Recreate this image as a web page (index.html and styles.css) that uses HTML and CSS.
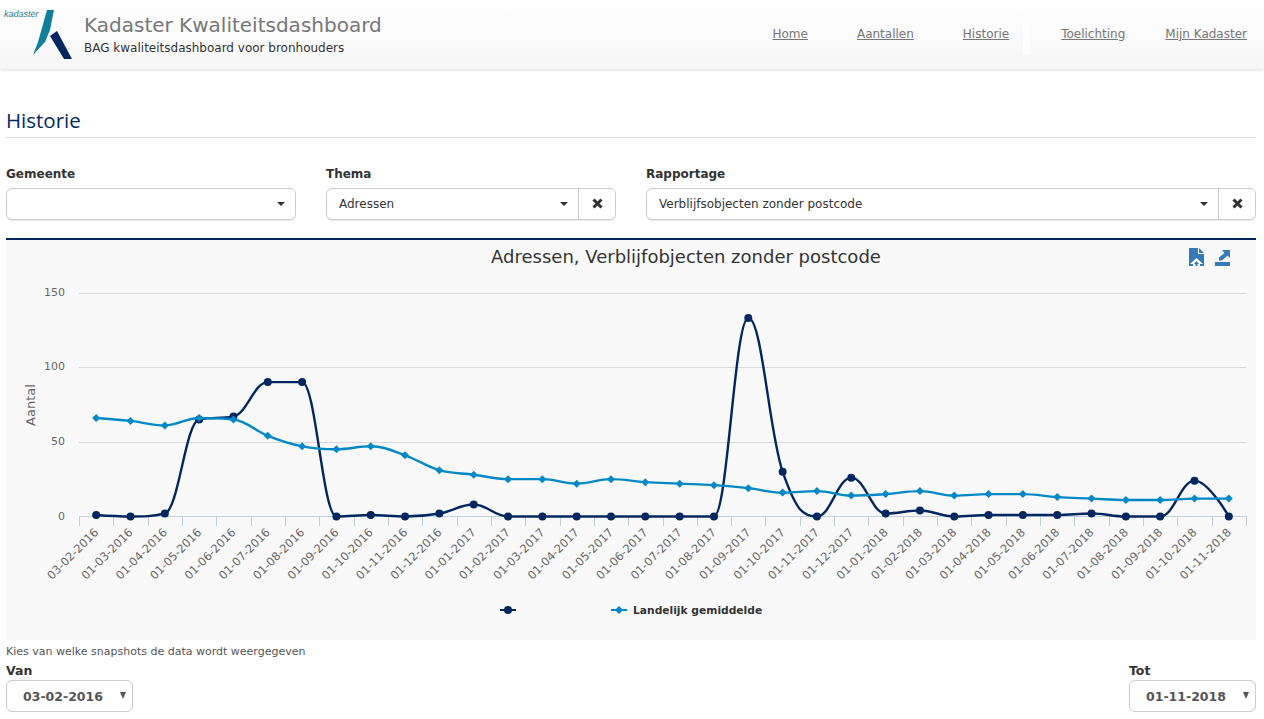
FILE: index.html
```html
<!DOCTYPE html>
<html lang="nl">
<head>
    <meta charset="UTF-8">
    <meta name="viewport" content="width=device-width, initial-scale=1.0">
    <title>Kadaster Kwaliteitsdashboard</title>
    <link rel="stylesheet" href="styles.css">
</head>
<body>
    <header class="topbar">
        <div class="brand">
            <div class="logo">
                <span class="logoText">kadaster</span>
                <svg class="logoMark" width="40" height="50" viewBox="0 0 40 50">
                    <polygon points="14,0 21,0 17,20 12,32 0,45 5,32" fill="#0f7f9c"></polygon>
                    <polygon points="17,26 24,21 39,49 31,49" fill="#00285f"></polygon>
                </svg>
            </div>
            <div class="brandText">
                <div class="siteTitle">Kadaster Kwaliteitsdashboard</div>
                <div class="siteSub">BAG kwaliteitsdashboard voor bronhouders</div>
            </div>
        </div>
        <nav class="mainNav">
            <a href="#" class="navHome">Home</a>
            <a href="#" class="navAantallen">Aantallen</a>
            <a href="#" class="navHistorie">Historie</a>
            <span class="navGap"></span>
            <a href="#" class="navToelichting">Toelichting</a>
            <a href="#" class="navMijn">Mijn Kadaster</a>
        </nav>
    </header>

    <main class="content">
        <h1 class="pageTitle">Historie</h1>

        <div class="filters">
            <div class="filter filterGemeente">
                <label>Gemeente</label>
                <div class="selectBox">
                    <div class="selectValue"><span></span><i class="caret"></i></div>
                </div>
            </div>
            <div class="filter filterThema">
                <label>Thema</label>
                <div class="selectBox">
                    <div class="selectValue"><span>Adressen</span><i class="caret"></i></div>
                    <button type="button" class="clearBtn">
                        <svg width="11" height="11" viewBox="0 0 11 11"><path d="M1.500 1.500L9.500 9.500M9.500 1.500L1.500 9.500" stroke="#333" stroke-width="3"></path></svg>
                    </button>
                </div>
            </div>
            <div class="filter filterRapportage">
                <label>Rapportage</label>
                <div class="selectBox">
                    <div class="selectValue"><span>Verblijfsobjecten zonder postcode</span><i class="caret"></i></div>
                    <button type="button" class="clearBtn">
                        <svg width="11" height="11" viewBox="0 0 11 11"><path d="M1.500 1.500L9.500 9.500M9.500 1.500L1.500 9.500" stroke="#333" stroke-width="3"></path></svg>
                    </button>
                </div>
            </div>
        </div>

        <section class="chartPanel">
            <div id="chart"></div>
        </section>

        <p class="hint">Kies van welke snapshots de data wordt weergegeven</p>
        <div class="range">
            <div class="rangeField">
                <label>Van</label>
                <div class="dateSelect"><span>03-02-2016</span><i class="caretSmall"></i></div>
            </div>
            <div class="rangeField">
                <label>Tot</label>
                <div class="dateSelect"><span>01-11-2018</span><i class="caretSmall"></i></div>
            </div>
        </div>
    </main>

    <script src="chart.js"></script>
</body>
</html>
```

FILE: styles.css
```css
* {
    box-sizing: border-box;
}

html, body {
    height: 100%;
}

body {
    margin: 0;
    font-family: Verdana, "DejaVu Sans", sans-serif;
    font-size: 12px;
    color: #333;
    background-color: #fff;
    overflow: hidden;
}

.topbar {
    height: 69px;
    display: flex;
    justify-content: space-between;
    background: linear-gradient(#fff, #f6f6f6);
    box-shadow: 0 1px 3px rgba(0, 0, 0, 0.15);
}

.brand {
    display: flex;
}

.logo {
    width: 84px;
    height: 60px;
    padding: 10px 0 0 4px;
    display: flex;
}

.logoText {
    width: 29px;
    font-family: "Liberation Sans", Arial, sans-serif;
    font-size: 9px;
    line-height: 9px;
    font-style: italic;
    color: #0f7f9c;
}

.logoMark {
    display: block;
}

.brandText {
    padding-top: 12px;
}

.siteTitle {
    font-size: 20px;
    line-height: 26px;
    color: #777;
}

.siteSub {
    font-size: 12px;
    line-height: 20px;
    color: #333;
}

.mainNav {
    display: flex;
    padding: 27px 17px 0 0;
}

.mainNav a {
    font-size: 12px;
    line-height: 15px;
    color: #777;
}

.navHome { margin-right: 49px; }
.navAantallen { margin-right: 49px; }
.navHistorie { margin-right: 14px; }
.navToelichting { margin-right: 40px; }

.navGap {
    width: 7px;
    height: 31px;
    margin: -4px 31px 0 0;
    background-color: #fff;
}

.content {
    padding: 0 8px 0 6px;
}

.pageTitle {
    margin: 40px 0 0;
    height: 29px;
    border-bottom: 1px solid #ddd;
    font-family: "Open Sans", sans-serif;
    font-size: 20.5px;
    line-height: 23px;
    font-weight: normal;
    color: #00285f;
}

.filters {
    display: flex;
    margin-top: 27px;
}

.filter label,
.rangeField label {
    display: block;
    font-weight: bold;
    color: #333;
}

.filter label {
    height: 23px;
    font-size: 12px;
    line-height: 19px;
}

.filterGemeente { width: 290px; margin-right: 30px; }
.filterThema { width: 290px; margin-right: 30px; }
.filterRapportage { width: 610px; }

.selectBox {
    display: flex;
    height: 32px;
    border: 1px solid #ccc;
    border-radius: 6px;
    background-color: #fff;
    box-shadow: 0 1px 1px rgba(0, 0, 0, 0.08);
}

.selectValue {
    flex: 1;
    display: flex;
    align-items: center;
    justify-content: space-between;
    padding: 0 10px 0 12px;
    font-size: 12px;
}

.caret {
    width: 0;
    height: 0;
    border-left: 4px solid transparent;
    border-right: 4px solid transparent;
    border-top: 4px solid #333;
}

.clearBtn {
    width: 37px;
    padding: 0 0 2px;
    border: none;
    border-left: 1px solid #ccc;
    background: none;
    display: flex;
    align-items: center;
    justify-content: center;
}

.chartPanel {
    margin-top: 18px;
    height: 402px;
    border-top: 2px solid #00285f;
    background-color: #f9f9f9;
}

#chart svg {
    display: block;
}

.hint {
    margin: 5px 0 0;
    font-size: 11px;
    line-height: 14px;
    color: #555;
}

.range {
    display: flex;
    justify-content: space-between;
    margin-top: 3px;
}

.rangeField label {
    font-size: 12.5px;
    line-height: 17px;
    margin-bottom: 1px;
}

.dateSelect {
    position: relative;
    width: 127px;
    height: 32px;
    border: 1px solid #ccc;
    border-radius: 6px;
    background-color: #fff;
    display: flex;
    align-items: center;
    padding-left: 16px;
    font-size: 12.5px;
    font-weight: bold;
    color: #555;
}

.caretSmall {
    position: absolute;
    right: 6px;
    top: 11px;
    width: 0;
    height: 0;
    border-left: 3.5px solid transparent;
    border-right: 3.5px solid transparent;
    border-top: 7px solid #555;
}
```

FILE: chart.js
```js
const NS = 'http://www.w3.org/2000/svg';

const dark = [1, 0, 2, 65, 67, 90, 90, 0, 1, 0, 2, 8, 0, 0, 0, 0, 0, 0, 0, 133, 30, 0, 26, 2, 4, 0, 1, 1, 1, 2, 0, 0, 24, 0];
const light = [66, 64, 61, 66, 65, 54, 47, 45, 47, 41, 31, 28, 25, 25, 22, 25, 23, 22, 21, 19, 16, 17, 14, 15, 17, 14, 15, 15, 13, 12, 11, 11, 12, 12];

const labels = ['03-02-2016'];
for (let i = 1; i < 34; i++) {
    const m = (i + 1) % 12;
    const y = 2016 + Math.floor((i + 1) / 12);
    labels.push('01-' + String(m + 1).padStart(2, '0') + '-' + y);
}

// chart panel starts at x=6, y=240 on the page
const left = 73, right = 1240, zero = 276.5, perUnit = 224 / 150;
const step = (right - left) / 34;
const xAt = i => left + step * (i + 0.5);
const yAt = v => zero - v * perUnit;

function el(name, attrs, text) {
    const node = document.createElementNS(NS, name);
    for (const key in attrs) node.setAttribute(key, attrs[key]);
    if (text !== undefined) node.textContent = text;
    return node;
}

// same spline as the chart library: control points at 1.5/2.5 of the way to the neighbours
function splinePath(values) {
    const pts = values.map((v, i) => [xAt(i), yAt(v)]);
    const cont = (i) => {
        const [x, y] = pts[i];
        const [lx, ly] = pts[i - 1];
        const [nx, ny] = pts[i + 1];
        const lcx = (1.5 * x + lx) / 2.5;
        let lcy = (1.5 * y + ly) / 2.5;
        const rcx = (1.5 * x + nx) / 2.5;
        let rcy = (1.5 * y + ny) / 2.5;
        const c = (rcy - lcy) * (rcx - x) / (rcx - lcx) + y - rcy;
        lcy += c;
        rcy += c;
        if (lcy > ly && lcy > y) {
            lcy = Math.max(ly, y);
            rcy = 2 * y - lcy;
        } else if (lcy < ly && lcy < y) {
            lcy = Math.min(ly, y);
            rcy = 2 * y - lcy;
        }
        if (rcy > ny && rcy > y) {
            rcy = Math.max(ny, y);
            lcy = 2 * y - rcy;
        } else if (rcy < ny && rcy < y) {
            rcy = Math.min(ny, y);
            lcy = 2 * y - rcy;
        }
        return { lcx, lcy, rcx, rcy };
    };

    let d = `M ${pts[0][0]} ${pts[0][1]}`;
    for (let i = 1; i < pts.length; i++) {
        const prev = i > 1 ? cont(i - 1) : { rcx: pts[0][0], rcy: pts[0][1] };
        const cur = i < pts.length - 1 ? cont(i) : { lcx: pts[i][0], lcy: pts[i][1] };
        d += ` C ${prev.rcx} ${prev.rcy} ${cur.lcx} ${cur.lcy} ${pts[i][0]} ${pts[i][1]}`;
    }
    return d;
}

const svg = el('svg', { width: 1250, height: 400, viewBox: '0 0 1250 400', 'font-family': 'Verdana, "DejaVu Sans", sans-serif' });

svg.appendChild(el('text', { x: 680, y: 23, 'text-anchor': 'middle', 'font-size': 18, fill: '#333' }, 'Adressen, Verblijfobjecten zonder postcode'));

// export icons
const iconUp = el('g', { transform: 'translate(1183 8)' });
iconUp.appendChild(el('path', { d: 'M0 0H9V6H15V18H0Z', fill: '#337ab7' }));
iconUp.appendChild(el('path', { d: 'M10 0L15 5H10Z', fill: '#337ab7' }));
iconUp.appendChild(el('path', { d: 'M7.500 10L14 16H11V18H4V16H1Z', fill: '#fff' }));
iconUp.appendChild(el('path', { d: 'M7.500 13L10 16H8.500V18H6.500V16H5Z', fill: '#337ab7' }));
svg.appendChild(iconUp);
const iconDown = el('g', { transform: 'translate(1209 10)', fill: '#337ab7' });
iconDown.appendChild(el('path', { d: 'M0 12H15V16H0Z' }));
iconDown.appendChild(el('path', { d: 'M7 0H15V8L12.500 5.500 7 10.500H4V7.500L9.500 3Z' }));
svg.appendChild(iconDown);

// grid and y axis
[150, 100, 50].forEach(v => {
    const y = Math.round(yAt(v)) + 0.5;
    svg.appendChild(el('line', { x1: left, x2: right, y1: y, y2: y, stroke: '#d8d8d8' }));
});
[0, 50, 100, 150].forEach(v => {
    svg.appendChild(el('text', { x: 59, y: yAt(v) + 3, 'text-anchor': 'end', 'font-size': 11, fill: '#666' }, v));
});
svg.appendChild(el('text', { transform: 'translate(29 165) rotate(-90)', 'text-anchor': 'middle', 'font-size': 13, fill: '#666' }, 'Aantal'));

// x axis
svg.appendChild(el('line', { x1: left, x2: right, y1: 276.5, y2: 276.5, stroke: '#c0d0e0' }));
for (let i = 0; i <= 34; i++) {
    const x = Math.round(left + step * i) + 0.5;
    svg.appendChild(el('line', { x1: x, x2: x, y1: 276, y2: 286, stroke: '#c0d0e0' }));
}
labels.forEach((label, i) => {
    const x = xAt(i) + 3, y = 293;
    svg.appendChild(el('text', { transform: `translate(${x} ${y}) rotate(-45)`, 'text-anchor': 'end', 'font-size': 11.5, fill: '#666' }, label));
});

// series
svg.appendChild(el('path', { d: splinePath(dark), fill: 'none', stroke: '#00285f', 'stroke-width': 2.4 }));
dark.forEach((v, i) => svg.appendChild(el('circle', { cx: xAt(i), cy: yAt(v), r: 4, fill: '#00285f' })));

const diamond = (x, y) => `${x},${y - 4} ${x + 4},${y} ${x},${y + 4} ${x - 4},${y}`;
svg.appendChild(el('path', { d: splinePath(light), fill: 'none', stroke: '#0088c6', 'stroke-width': 2.4 }));
light.forEach((v, i) => svg.appendChild(el('polygon', { points: diamond(xAt(i), yAt(v)), fill: '#0088c6' })));

// legend
svg.appendChild(el('line', { x1: 494, x2: 510, y1: 370, y2: 370, stroke: '#00285f', 'stroke-width': 2 }));
svg.appendChild(el('circle', { cx: 502, cy: 370, r: 4, fill: '#00285f' }));
svg.appendChild(el('line', { x1: 605, x2: 621, y1: 370, y2: 370, stroke: '#0088c6', 'stroke-width': 2 }));
svg.appendChild(el('polygon', { points: diamond(613, 370), fill: '#0088c6' }));
svg.appendChild(el('text', { x: 627, y: 374, 'font-size': 10.7, 'font-weight': 'bold', fill: '#333' }, 'Landelijk gemiddelde'));

document.getElementById('chart').appendChild(svg);
```
